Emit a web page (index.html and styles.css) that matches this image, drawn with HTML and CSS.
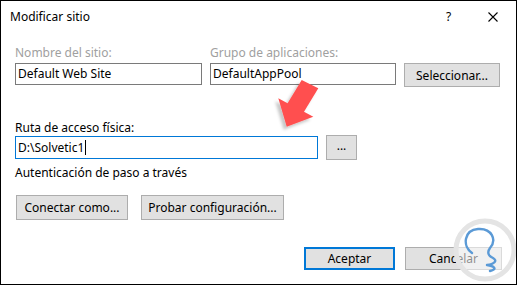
FILE: index.html
```html
<!DOCTYPE html>
<html lang="es">
<head>
  <meta charset="UTF-8">
  <title>Modificar sitio</title>
  <link rel="stylesheet" href="styles.css">
</head>
<body>

  <div class="window">
    <div class="titlebar">
      <span class="title">Modificar sitio</span>
      <span class="help">?</span>
      <span class="close">
        <svg width="10" height="10" viewBox="0 0 10 10">
          <path d="M0.5 0.5 L9.5 9.5 M9.5 0.5 L0.5 9.5" stroke="#000" stroke-width="1.1" fill="none"/>
        </svg>
      </span>
    </div>

    <div class="content">
      <!-- Sitio y grupo -->
      <div class="top-grid">
        <div class="label disabled">Nombre del sitio:</div>
        <div class="label disabled">Grupo de aplicaciones:</div>
        <div></div>
        <div class="field">Default Web Site</div>
        <div class="field">DefaultAppPool</div>
        <button class="btn btn-select">Seleccionar...</button>
      </div>

      <!-- Ruta -->
      <div class="label path-label">Ruta de acceso física:</div>
      <div class="path-row">
        <div class="field field-path focused">D:\Solvetic1<span class="caret"></span></div>
        <button class="btn btn-browse">...</button>
      </div>
      <div class="label auth-label">Autenticación de paso a través</div>

      <div class="btn-row">
        <button class="btn btn-connect">Conectar como...</button>
        <button class="btn btn-test">Probar configuración...</button>
      </div>

      <div class="footer">
        <button class="btn btn-ok">Aceptar</button>
        <button class="btn btn-cancel">Cancelar</button>
      </div>
    </div>

    <!-- flecha roja -->
    <svg class="arrow" width="56" height="60" viewBox="269 73 56 60">
      <defs>
        <filter id="sombra" x="-30%" y="-30%" width="160%" height="160%">
          <feDropShadow dx="-3" dy="3" stdDeviation="1.5" flood-color="#000" flood-opacity="0.22"/>
        </filter>
      </defs>
      <polygon points="301.7,80 318.3,88.3 304,111.8 313.3,116.7 286.7,126.7 278.3,98.3 287.6,103.2" fill="#ff5050" filter="url(#sombra)"/>
    </svg>

    <!-- marca de agua -->
    <svg class="watermark" width="70" height="71" viewBox="449 215 70 71">
      <circle cx="485" cy="250" r="29" fill="rgba(255,255,255,0.55)" stroke="#e4e4e4" stroke-width="5"/>
      <path d="M472 253 C462 246 464 230 478 229 C492 228 497 240 490 248 C487 252 488 256 493 258 C498 261 494 264 487 265 C494 266 498 269 490 271"
            fill="none" stroke="#5b9ad6" stroke-width="2.4" stroke-linecap="round" stroke-linejoin="round"/>
    </svg>
  </div>

</body>
</html>
```

FILE: styles.css
```css
body {
  margin: 0;
  background-color: white;
  font-family: "Noto Sans", "Open Sans", sans-serif;
  font-size: 12px;
  color: black;
}
.window {
  position: relative;
  width: 517px;
  height: 285px;
  box-sizing: border-box;
  border: 1px solid black;
  background-color: white;
  overflow: hidden;
}
.titlebar {
  display: flex;
  align-items: center;
  height: 31px;
  padding-left: 9px;
}
.title {
  flex: 1;
  line-height: 15px;
}
.help {
  width: 12px;
  margin-right: 30px;
  line-height: 15px;
}
.close {
  display: flex;
  width: 10px;
  margin-right: 18px;
}
.content {
  padding: 0 14px;
}
.label {
  line-height: 15px;
  white-space: nowrap;
}
.disabled {
  color: #a0a0a0;
}
.top-grid {
  display: grid;
  grid-template-columns: 187px 186px 96px;
  column-gap: 8px;
  row-gap: 3px;
  align-items: start;
  margin-top: 13px;
}
.field {
  height: 22px;
  box-sizing: border-box;
  border: 1px solid #7a7a7a;
  padding: 0 2px;
  line-height: 20px;
  white-space: nowrap;
}
.btn {
  font-family: inherit;
  font-size: 12px;
  color: black;
  background-color: #e1e1e1;
  border: 1px solid #adadad;
  padding: 0;
  margin: 0;
  box-sizing: border-box;
  white-space: nowrap;
}
.btn-select {
  height: 24px;
}
.path-label {
  margin-top: 33px;
}
.path-row {
  display: flex;
  align-items: center;
  gap: 8px;
}
.field-path {
  width: 303px;
  height: 23px;
  line-height: 21px;
}
.focused {
  border-color: #0078d7;
}
.caret {
  display: inline-block;
  width: 1px;
  height: 15px;
  margin-left: 1px;
  background-color: black;
  vertical-align: -3px;
}
.btn-browse {
  width: 31px;
  height: 25px;
  padding-bottom: 4px;
}
.auth-label {
  margin-top: 5px;
}
.btn-row {
  display: flex;
  gap: 13px;
  margin-top: 15px;
  padding-left: 1px;
}
.btn-connect {
  width: 112px;
  height: 25px;
}
.btn-test {
  width: 143px;
  height: 25px;
}
.footer {
  display: flex;
  justify-content: flex-end;
  gap: 10px;
  margin-top: 27px;
}
.btn-ok {
  width: 91px;
  height: 23px;
  border: 2px solid #0078d7;
}
.btn-cancel {
  width: 97px;
  height: 23px;
}
.arrow {
  position: absolute;
  left: 268px;
  top: 72px;
}
.watermark {
  position: absolute;
  left: 448px;
  top: 214px;
}
```
